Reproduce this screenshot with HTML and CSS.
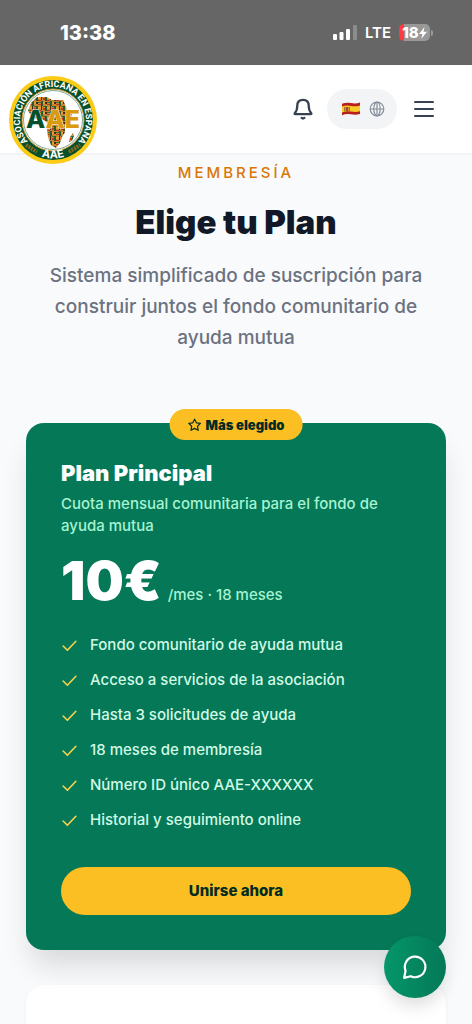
FILE: index.html
```html
<!DOCTYPE html>
<html lang="es">
<head>
    <meta charset="UTF-8">
    <meta name="viewport" content="width=device-width, initial-scale=1.0">
    <title>Elige tu Plan</title>
    <link rel="stylesheet" href="styles.css">
</head>
<body>

<!-- Phone status bar -->
<div class="status-bar">
    <span class="time">13:38</span>
    <div class="status-icons">
        <svg width="24" height="16" viewBox="0 0 24 16" fill="#fff" aria-hidden="true">
            <rect x="0" y="9" width="4" height="6" rx="1"/>
            <rect x="6.500" y="7" width="4" height="8" rx="1"/>
            <rect x="13" y="4" width="4" height="11" rx="1"/>
            <rect x="20" y="0" width="4" height="15" rx="1" opacity="0.25"/>
        </svg>
        <span class="network">LTE</span>
        <div class="battery">
            <span class="battery-body">18<svg width="8" height="12" viewBox="0 0 8 12" fill="#fff" aria-hidden="true"><path d="M5.500 0 0 7h3.400L2.200 12 8 4.800H4.500z"/></svg></span>
            <span class="battery-tip"></span>
        </div>
    </div>
</div>

<!-- Site header -->
<header class="header">
    <a href="#" class="logo" aria-label="Asociación Africana en España">
        <svg width="88" height="88" viewBox="0 0 88 88" aria-hidden="true">
            <defs>
                <pattern id="kente" width="9" height="10" patternUnits="userSpaceOnUse">
                    <rect width="9" height="10" fill="#c9852f"/>
                    <path d="M0 0h2v5H0zM5 5h2v5H5z" fill="#2a5a30"/>
                    <path d="M2 1h3v2H2zM7 6h2v2H7z" fill="#e5a32c"/>
                    <path d="M5 0h1v4H5zM0 6h2v2H0z" fill="#4a2415"/>
                    <path d="M2 4h3v1H2zM7 2h2v2H7zM2 8h3v1H2z" fill="#c0391f"/>
                    <path d="M2 6h3v1H2zM7 0h2v1H7z" fill="#33763b"/>
                </pattern>
                <path id="arcTop" d="M19 65.500A33 33 0 1 1 69 65.500"/>
                <path id="arcBottom" d="M20 74A38.500 38.500 0 0 0 68 74"/>
            </defs>
            <circle cx="44" cy="44" r="44" fill="#fccb16"/>
            <circle cx="44" cy="44" r="40" fill="#07502d"/>
            <circle cx="44" cy="44" r="31" fill="#fff" stroke="#c8972e" stroke-width="1"/>
            <circle cx="44" cy="44" r="29.500" fill="none" stroke="#07502d" stroke-width="0.500"/>
            <path d="M22 27 28 21 38 21 43 24 54 24 57 31 59 36 64 36 61 44 56 49 56 56 53 61 51 67 47 72 42 69 39 61 38 53 39 47 33 43 24 42 19 35z" fill="url(#kente)"/>
            <path d="m64 57-3 4-1 5 3-1 2-5z" fill="url(#kente)"/>
            <text class="logo-ring"><textPath href="#arcTop" startOffset="50%">ASOCIACIÓN AFRICANA EN ESPAÑA</textPath></text>
            <path d="M17 69l11 7M60 76l11-7" stroke="#8c6820" stroke-width="4" stroke-dasharray="2 1"/>
            <text class="logo-bottom"><textPath href="#arcBottom" startOffset="50%">AAE</textPath></text>
            <text class="logo-name" x="44" y="52"><tspan fill="#07502d">A</tspan><tspan fill="#d99a10">AE</tspan></text>
        </svg>
    </a>
    <nav class="actions">
        <button class="icon-btn" aria-label="Notificaciones">
            <svg width="20" height="22" viewBox="0 0 22 24" fill="none" stroke="#374151" stroke-width="2.500" stroke-linecap="round" stroke-linejoin="round">
                <path d="M11 2C7 2 4.700 4.700 4.700 8.500C4.700 13 3.500 15 2 16.500C1.500 17.200 1.700 17.700 2.500 17.700H19.500C20.300 17.700 20.500 17.200 20 16.500C18.500 15 17.300 13 17.300 8.500C17.300 4.700 15 2 11 2Z"/>
                <path d="M9.500 21.800q1.500 1.200 3 0"/>
            </svg>
        </button>
        <button class="lang-btn" aria-label="Idioma: español">
            <svg width="18" height="14" viewBox="0 0 18 14" aria-hidden="true">
                <path d="M0 1.800Q4.500 0 9 1T18 .5V12Q13.500 13.300 9 12.300T0 13.200Z" fill="#b8201e"/>
                <path d="M0 4.400Q4.500 2.900 9 3.900T18 3.400V9.300Q13.500 10.500 9 9.500T0 10.500Z" fill="#f7cb25"/>
                <path d="M3.500 5h3v3.500l-1.500 1-1.500-1z" fill="#b5472b"/>
                <path d="M2.500 5v4M7.500 5v4" stroke="#9c7b3a"/>
            </svg>
            <svg width="16" height="16" viewBox="0 0 16 16" fill="none" stroke="#858d9b" stroke-width="1.200" aria-hidden="true">
                <circle cx="8" cy="8" r="6.800"/>
                <ellipse cx="8" cy="8" rx="3.200" ry="6.800"/>
                <path d="M8 1.200v13.600M1.200 8h13.600"/>
            </svg>
        </button>
        <button class="icon-btn menu-btn" aria-label="Menú">
            <svg width="20" height="18" viewBox="0 0 20 18" stroke="#374151" stroke-width="2" stroke-linecap="round">
                <path d="M1 2h18M1 9h18M1 16h18"/>
            </svg>
        </button>
    </nav>
</header>

<main class="plans">
    <p class="eyebrow">MEMBRESÍA</p>
    <h1>Elige tu Plan</h1>
    <p class="intro">Sistema simplificado de suscripción para construir juntos el fondo comunitario de ayuda mutua</p>

    <!-- Main plan -->
    <section class="card card-main">
        <span class="badge">
            <svg width="14" height="14" viewBox="0 0 24 24" fill="none" stroke="#022c22" stroke-width="2" stroke-linejoin="round" aria-hidden="true">
                <path d="m12 2 3.100 6.300 6.900 1-5 4.900 1.200 6.900L12 17.800l-6.200 3.300L7 14.200 2 9.300l6.900-1z"/>
            </svg>
            Más elegido
        </span>
        <h2>Plan Principal</h2>
        <p class="description">Cuota mensual comunitaria para el fondo de ayuda mutua</p>
        <p class="price"><strong>10€</strong><span>/mes · 18 meses</span></p>
        <ul class="features">
            <li><svg class="check" viewBox="0 0 16 16"><path d="m2 8.500 4 4 8-8.500"/></svg>Fondo comunitario de ayuda mutua</li>
            <li><svg class="check" viewBox="0 0 16 16"><path d="m2 8.500 4 4 8-8.500"/></svg>Acceso a servicios de la asociación</li>
            <li><svg class="check" viewBox="0 0 16 16"><path d="m2 8.500 4 4 8-8.500"/></svg>Hasta 3 solicitudes de ayuda</li>
            <li><svg class="check" viewBox="0 0 16 16"><path d="m2 8.500 4 4 8-8.500"/></svg>18 meses de membresía</li>
            <li><svg class="check" viewBox="0 0 16 16"><path d="m2 8.500 4 4 8-8.500"/></svg>Número ID único AAE-XXXXXX</li>
            <li><svg class="check" viewBox="0 0 16 16"><path d="m2 8.500 4 4 8-8.500"/></svg>Historial y seguimiento online</li>
        </ul>
        <a href="#" class="join">Unirse ahora</a>
    </section>

    <section class="card card-next"></section>
</main>

<!-- Floating chat button -->
<button class="chat" aria-label="Abrir chat">
    <svg width="26" height="26" viewBox="0 0 24 24" fill="none" stroke="#fff" stroke-width="2" stroke-linecap="round" stroke-linejoin="round">
        <path d="M3.300 15.500A9.500 9.500 0 1 1 8 20.500L2 22Z"/>
    </svg>
</button>

</body>
</html>
```

FILE: styles.css
```css
* {
    box-sizing: border-box;
    margin: 0;
    padding: 0;
}
body {
    display: flex;
    flex-direction: column;
    min-height: 100vh;
    font-family: Inter, "Liberation Sans", sans-serif;
    background: #f9fafc;
    color: #111827;
}
button {
    border: none;
    background: none;
    font: inherit;
    cursor: pointer;
}
svg {
    display: block;
    flex-shrink: 0;
}

/* Status bar */
.status-bar {
    display: flex;
    justify-content: space-between;
    align-items: center;
    height: 65px;
    padding: 0 39px 0 60px;
    background: #666;
    color: #fff;
}
.time {
    font-size: 20px;
    font-weight: 800;
}
.status-icons {
    display: flex;
    align-items: center;
    gap: 8px;
}
.network {
    font-size: 15px;
    font-weight: 600;
}
.battery {
    display: flex;
    align-items: center;
    gap: 1px;
}
.battery-body {
    display: flex;
    align-items: center;
    justify-content: center;
    width: 31px;
    height: 17px;
    border-radius: 5px;
    background: linear-gradient(to right, #ff3b3f 5px, #999 5px);
    font-size: 15px;
    font-weight: 800;
}
.battery-tip {
    width: 2px;
    height: 6px;
    border-radius: 0 2px 2px 0;
    background: #999;
}

/* Header, the logo hangs over its bottom edge */
.header {
    position: relative;
    z-index: 1;
    display: flex;
    justify-content: flex-end;
    align-items: center;
    height: 88px;
    padding: 0 38px;
    background: #fff;
    box-shadow: 0 1px 2px rgba(0, 0, 0, 0.06);
}
.logo {
    position: absolute;
    left: 9px;
    top: 11px;
}
.logo-ring, .logo-bottom, .logo-name {
    font-weight: 700;
    text-anchor: middle;
}
.logo-ring {
    font-family: Roboto, sans-serif;
    font-size: 9px;
    fill: #fff;
}
.logo-bottom {
    font-size: 11px;
    fill: #fff;
}
.logo-name {
    font-size: 25px;
    font-weight: 800;
    stroke: #fff;
    stroke-width: 1px;
    paint-order: stroke;
}
.actions {
    display: flex;
    align-items: center;
    gap: 14px;
}
.menu-btn {
    padding-left: 3px;
}
.lang-btn {
    display: flex;
    align-items: center;
    gap: 9px;
    height: 40px;
    padding: 0 12px 0 15px;
    border-radius: 20px;
    background: #f3f4f6;
}

/* Plans */
.plans {
    flex: 1;
    display: flex;
    flex-direction: column;
    padding: 10px 26px 0;
}
.eyebrow {
    margin-bottom: 19px;
    font-size: 15px;
    line-height: 20px;
    font-weight: 500;
    letter-spacing: 3px;
    text-align: center;
    color: #d97706;
}
h1 {
    margin-bottom: 18px;
    font-size: 33px;
    line-height: 40px;
    font-weight: 900;
    text-align: center;
}
.intro {
    margin-bottom: 70px;
    font-size: 19px;
    line-height: 31px;
    font-weight: 500;
    text-align: center;
    color: #6b7280;
}
.card {
    border-radius: 18px;
}
.card-main {
    position: relative;
    padding: 35px;
    background: #047857;
    color: #fff;
    box-shadow: 0 20px 30px -6px rgba(0, 0, 0, 0.14);
}
.badge {
    position: absolute;
    top: -14px;
    left: 50%;
    transform: translateX(-50%);
    display: flex;
    align-items: center;
    gap: 4px;
    height: 31px;
    padding: 0 18px;
    border-radius: 16px;
    background: #fbbf24;
    color: #022c22;
    font-size: 13px;
    font-weight: 900;
    white-space: nowrap;
}
h2 {
    margin-bottom: 5px;
    font-size: 22px;
    line-height: 30px;
    font-weight: 900;
}
.description {
    margin-bottom: 18px;
    font-size: 15px;
    line-height: 22px;
    font-weight: 500;
    color: #a7f3d0;
}
.price {
    display: flex;
    align-items: baseline;
    gap: 6px;
    margin-bottom: 27px;
}
.price strong {
    font-size: 54px;
    line-height: 52px;
    font-weight: 900;
}
.price span {
    font-size: 15px;
    line-height: 22px;
    font-weight: 500;
    color: #a7f3d0;
}
.features {
    display: flex;
    flex-direction: column;
    gap: 13px;
    margin-bottom: 36px;
    list-style: none;
}
.features li {
    display: flex;
    align-items: center;
    gap: 12px;
    font-size: 15px;
    line-height: 22px;
    font-weight: 500;
    color: #d1fae5;
}
.check {
    width: 17px;
    height: 17px;
    fill: none;
    stroke: #fcd34d;
    stroke-width: 1.5px;
    stroke-linecap: round;
    stroke-linejoin: round;
}
.join {
    display: block;
    border-radius: 24px;
    background: #fbbf24;
    color: #022c22;
    font-size: 15px;
    line-height: 48px;
    font-weight: 800;
    text-align: center;
    text-decoration: none;
}
.card-next {
    flex: 1;
    margin-top: 35px;
    border-radius: 18px 18px 0 0;
    background: #fff;
    box-shadow: 0 1px 3px rgba(0, 0, 0, 0.06);
}

/* Chat */
.chat {
    position: fixed;
    z-index: 2;
    right: 26px;
    bottom: 26px;
    display: flex;
    align-items: center;
    justify-content: center;
    width: 62px;
    height: 62px;
    border-radius: 50%;
    background: linear-gradient(to right, #059669, #047857);
    box-shadow: 0 10px 18px -3px rgba(0, 0, 0, 0.15);
}
```
